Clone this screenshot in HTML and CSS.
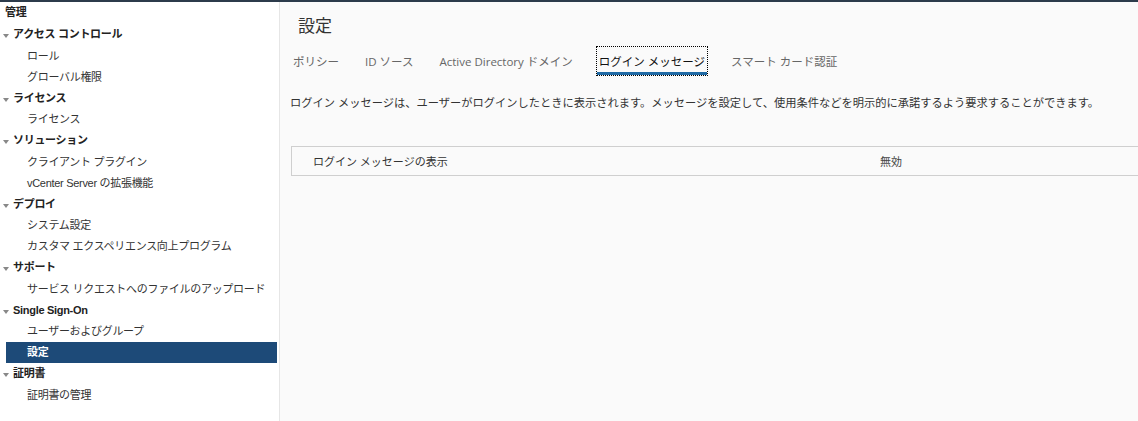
FILE: index.html
```html
<!DOCTYPE html>
<html lang="ja">
<head>
    <meta charset="UTF-8">
    <title>設定</title>
    <link rel="stylesheet" href="styles.css">
</head>
<body>
    <div class="top-stripe"></div>
    <div class="layout">
        <div class="sidebar">
            <div class="side-title">管理</div>
            <div class="group">アクセス コントロール</div>
            <div class="item">ロール</div>
            <div class="item">グローバル権限</div>
            <div class="group">ライセンス</div>
            <div class="item">ライセンス</div>
            <div class="group">ソリューション</div>
            <div class="item">クライアント プラグイン</div>
            <div class="item">vCenter Server の拡張機能</div>
            <div class="group">デプロイ</div>
            <div class="item">システム設定</div>
            <div class="item">カスタマ エクスペリエンス向上プログラム</div>
            <div class="group">サポート</div>
            <div class="item">サービス リクエストへのファイルのアップロード</div>
            <div class="group">Single Sign-On</div>
            <div class="item">ユーザーおよびグループ</div>
            <div class="item item-selected">設定</div>
            <div class="group">証明書</div>
            <div class="item">証明書の管理</div>
        </div>
        <div class="main">
            <h1 class="page-title">設定</h1>
            <div class="tabs">
                <span class="tab">ポリシー</span>
                <span class="tab">ID ソース</span>
                <span class="tab">Active Directory ドメイン</span>
                <span class="tab tab-active">ログイン メッセージ</span>
                <span class="tab">スマート カード認証</span>
            </div>
            <p class="description">ログイン メッセージは、ユーザーがログインしたときに表示されます。メッセージを設定して、使用条件などを明示的に承諾するよう要求することができます。</p>
            <div class="setting-row">
                <div class="setting-label">ログイン メッセージの表示</div>
                <div class="setting-value">無効</div>
            </div>
        </div>
    </div>
</body>
</html>
```

FILE: styles.css
```css
body {
  margin: 0;
  font-family: "Liberation Sans", "Noto Sans CJK JP", sans-serif;
  font-size: 11px;
  color: #333;
  background-color: #fafafa;
  overflow: hidden;
}
.top-stripe {
  height: 2px;
  background-color: #2c3b4b;
}
.layout {
  display: flex;
  height: 419px;
}
.sidebar {
  width: 279px;
  flex-shrink: 0;
  background-color: #fff;
  border-right: 1px solid #e6e6e6;
  letter-spacing: -0.3px;
}
.side-title {
  height: 22px;
  line-height: 21px;
  padding-left: 5px;
  font-weight: bold;
  color: #222;
}
.group {
  position: relative;
  height: 21.5px;
  line-height: 21.5px;
  padding-left: 13px;
  font-weight: bold;
  color: #222;
}
.group::before {
  content: "";
  position: absolute;
  left: 3px;
  top: 10px;
  border-left: 3px solid transparent;
  border-right: 3px solid transparent;
  border-top: 4px solid #888;
}
.item {
  height: 21px;
  line-height: 21px;
  margin: 0 2px 0 6px;
  padding-left: 21px;
  color: #333;
}
.item-selected {
  background-color: #1d4a78;
  color: #fff;
  font-weight: bold;
}
.main {
  flex: 1;
  padding: 12px 0 0 10px;
  background-color: #fafafa;
  font-family: "Open Sans", "Noto Sans CJK JP", sans-serif;
}
.page-title {
  margin: 0;
  padding-left: 8px;
  font-size: 17px;
  font-weight: normal;
  line-height: 24px;
  color: #333;
}
.tabs {
  display: flex;
  gap: 22px;
  margin-top: 9px;
  padding-left: 1px;
  font-size: 11.5px;
}
.tab {
  height: 28px;
  box-sizing: border-box;
  padding: 7px 2px 0;
  line-height: 16px;
  color: #666;
}
.tab-active {
  color: #111;
  border-bottom: 3px solid #1f6aa5;
  outline: 1px dotted #000;
}
.description {
  margin: 20px 0 0;
  font-size: 11.25px;
  line-height: 16px;
  color: #333;
}
.setting-row {
  display: grid;
  grid-template-columns: 588px 1fr;
  margin: 35px 0 0 1px;
  height: 30px;
  box-sizing: border-box;
  border: 1px solid #cfcfcf;
  border-right: none;
  align-items: center;
}
.setting-label {
  padding-left: 21px;
  color: #333;
}
.setting-value {
  color: #444;
}
```
